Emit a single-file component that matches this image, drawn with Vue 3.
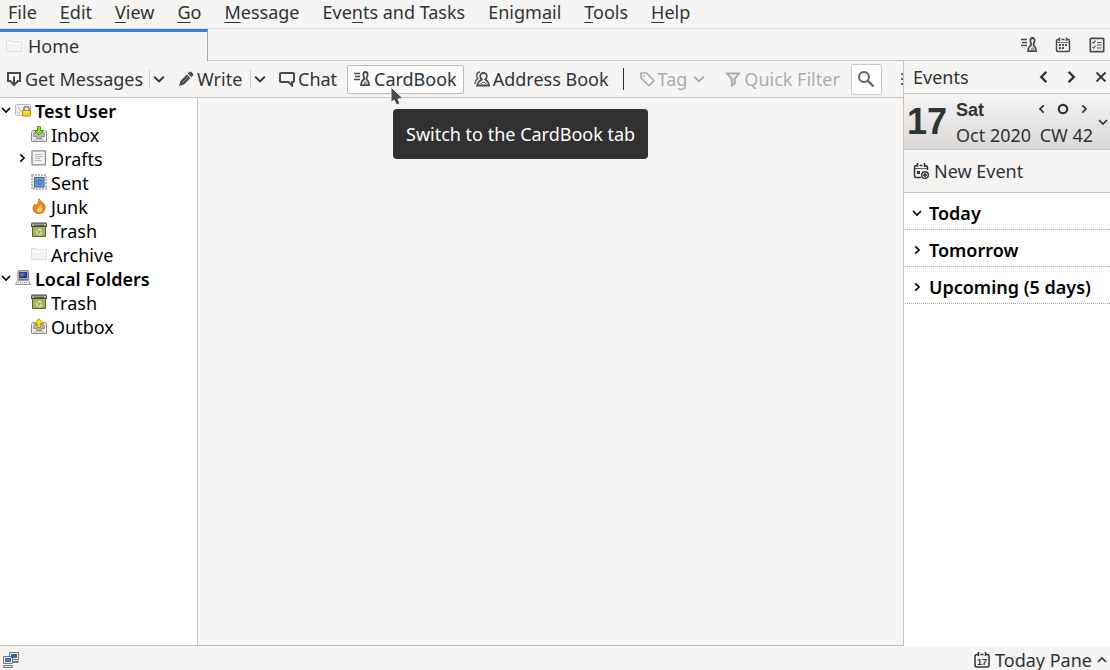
<script setup>
import { ref } from 'vue'

const menus = [
  ['', 'F', 'ile'], ['', 'E', 'dit'], ['', 'V', 'iew'], ['', 'G', 'o'], ['', 'M', 'essage'],
  ['Eve', 'n', 'ts and Tasks'], ['Enigm', 'a', 'il'], ['', 'T', 'ools'], ['', 'H', 'elp'],
]
const folders = [
  { name: 'Test User', icon: 'account', root: true, arrow: 'down' },
  { name: 'Inbox', icon: 'inbox' },
  { name: 'Drafts', icon: 'drafts', arrow: 'right' },
  { name: 'Sent', icon: 'sent' },
  { name: 'Junk', icon: 'junk' },
  { name: 'Trash', icon: 'trash' },
  { name: 'Archive', icon: 'folder' },
  { name: 'Local Folders', icon: 'computer', root: true, arrow: 'down' },
  { name: 'Trash', icon: 'trash' },
  { name: 'Outbox', icon: 'outbox' },
]
const agenda = ref([
  { name: 'Today', open: true },
  { name: 'Tomorrow', open: false },
  { name: 'Upcoming (5 days)', open: false },
])
</script>

<template>
  <div class="window">
    <svg class="defs" aria-hidden="true">
      <symbol id="down" viewBox="0 0 10 10"><path d="M1 3l4 4 4-4" fill="none" stroke="currentColor" stroke-width="1.700" /></symbol>
      <symbol id="up" viewBox="0 0 10 10"><path d="M1 7l4-4 4 4" fill="none" stroke="currentColor" stroke-width="1.700" /></symbol>
      <symbol id="right" viewBox="0 0 10 10"><path d="M3.300 1.300 7 5 3.300 8.700" fill="none" stroke="currentColor" stroke-width="1.700" /></symbol>
      <symbol id="left" viewBox="0 0 10 10"><path d="M6.700 1.300 3 5l3.700 3.700" fill="none" stroke="currentColor" stroke-width="1.700" /></symbol>
      <symbol id="close" viewBox="0 0 12 12"><path d="m1.500 1.500 9 9m0-9-9 9" fill="none" stroke="currentColor" stroke-width="1.800" /></symbol>
      <symbol id="ring" viewBox="0 0 12 12"><circle cx="6" cy="6" r="4.200" fill="none" stroke="currentColor" stroke-width="2.200" /></symbol>
      <symbol id="get" viewBox="0 0 16 16"><path d="M5 10H2V2h12v8h-3M8 5.500v8M4.500 10.500 8 14l3.500-3.500" fill="none" stroke="currentColor" stroke-width="2" /></symbol>
      <symbol id="write" viewBox="0 0 16 16"><path d="m1 15 1.400-5L8.800 3.600l3.600 3.600L6 13.600zM9.800 2.600l1.700-1.700q1-.8 2 .1l1.500 1.500q.9 1 0 2l-1.600 1.700z" fill="currentColor" /><path d="m4.500 11.500 5.500-5.500" stroke="#aaa" stroke-width=".8" /></symbol>
      <symbol id="chat" viewBox="0 0 16 16"><path d="M2 2h12q1 0 1 1v7q0 1-1 1h-1v3.500L9.500 11H2q-1 0-1-1V3q0-1 1-1z" fill="none" stroke="currentColor" stroke-width="2" /></symbol>
      <symbol id="cardbook" viewBox="0 0 16 16"><path d="M0 2.500h6M1 5.500h5M0 8.500h6" stroke="currentColor" stroke-width="1.600" /><path d="M11.500 1c-1.800 0-2.300 1.500-2.100 3.200.2 1.500.8 2 .8 3.200 0 1.200-1 1.300-2.100 2.600-.8 1-1 2.300-1 4.200H15c0-2-.2-3.200-1-4.200-1.100-1.300-1.500-1.400-1.500-2.600s.9-1.700 1.100-3.200C13.800 2.500 13.300 1 11.500 1z" fill="none" stroke="currentColor" stroke-width="1.800" /><path d="M9.500 13.500V12q1-2 2-2t2 2v1.500z" fill="currentColor" opacity=".5" /></symbol>
      <symbol id="address" viewBox="0 0 16 16"><path d="M6 1Q2.500 1.500 2.800 5q.2 1.800 1 2.700Q1 9.500.7 13" fill="none" stroke="currentColor" stroke-width="1.400" /><path d="M9.500 2C7.300 2 6 3.500 6.200 5.500c.2 1.400.9 2.400 1.500 3C5.500 9.800 3.800 11 3.200 14.500H15c-.3-3.500-1.700-4.700-3.700-6 .7-.6 1.300-1.500 1.500-3C13.100 3.500 11.800 2 9.500 2z" fill="none" stroke="currentColor" stroke-width="1.800" /><path d="M6.500 13.200q3-4 6 0" fill="none" stroke="currentColor" stroke-width="1" /></symbol>
      <symbol id="tag" viewBox="0 0 16 16"><path d="M2 2h5.500l7 7q.6.600 0 1.200l-4 4q-.6.600-1.200 0L2 7z" fill="none" stroke="currentColor" stroke-width="1.700" /><circle cx="5" cy="5" r="1.100" fill="currentColor" /></symbol>
      <symbol id="filter" viewBox="0 0 16 16"><path d="M2 2.500h12L9.800 8v4.500l-3 2V8z" fill="none" stroke="currentColor" stroke-width="1.900" /><path d="M4 5h8L9 8v4.500l-2 1V8z" fill="currentColor" opacity=".25" /></symbol>
      <symbol id="search" viewBox="0 0 18 18"><circle cx="7" cy="7" r="5" fill="none" stroke="currentColor" stroke-width="2" /><path d="m10.500 10.500 6 6" stroke="currentColor" stroke-width="2.300" /></symbol>
      <symbol id="calendar" viewBox="0 0 16 16"><path d="M4 2.500H3Q1.500 2.500 1.500 4v9q0 1.500 1.500 1.500h10q1.500 0 1.500-1.500V4q0-1.500-1.500-1.500h-1M6.500 2.500h3M4.500.5v3.500M11.500.5v3.500" fill="none" stroke="currentColor" stroke-width="1.500" /><path d="M4 8h2M7 8h2M10 8h2M4 11h2M7 11h2" stroke="currentColor" stroke-width="2" /><path d="M2 5.500h12" stroke="currentColor" stroke-width=".8" /></symbol>
      <symbol id="tasks" viewBox="0 0 16 16"><rect x="1.300" y="1.300" width="13.400" height="13.400" rx="1" fill="none" stroke="currentColor" stroke-width="1.700" /><path d="m3.500 5 1 1.200 2.200-2.700M3.500 10l1 1.200 2.200-2.700M8 5.500h4.500M8 8h4.500M8 11h4.500" fill="none" stroke="currentColor" stroke-width="1.100" /></symbol>
      <symbol id="newevent" viewBox="0 0 16 16"><path d="M4 2.500H3Q1.500 2.500 1.500 4v9q0 1.500 1.500 1.500h5M12 2.500q2.500 0 2.500 2.500v2M6.500 2.500h3M4.500 0v4M11.500 0v4" fill="none" stroke="currentColor" stroke-width="1.500" /><path d="M2 5.500h12" stroke="currentColor" stroke-width=".8" /><path d="M4 8h3v3H4z" fill="currentColor" /><circle cx="12" cy="12" r="3.300" fill="none" stroke="currentColor" stroke-width="1.400" /><path d="M10 12h4m-2-2v4" stroke="currentColor" stroke-width="1.400" /></symbol>
      <symbol id="folder" viewBox="0 0 16 16"><path d="M.5 13.500v-11h5l1 1.500h9v9.500z" fill="#f3f3f3" stroke="#dfdfdf" /><path d="M1 5.500h14" stroke="#fff" /></symbol>
      <symbol id="account" viewBox="0 0 16 16"><rect x=".5" y="2.500" width="15" height="11" rx="1" fill="#eee" stroke="#bbb" /><path d="m2.500 5 4 3.500-4 3.500m4-3.500h2" fill="none" stroke="#bbb" stroke-width="1" /><path d="M9 9V7q0-2.500 2.500-2.500T14 7v2" fill="none" stroke="#888" stroke-width="1.700" /><rect x="7.500" y="8.500" width="8" height="5.500" rx=".5" fill="#f5cf25" stroke="#b88a00" /><path d="M8.500 10h6" stroke="#ffed85" /></symbol>
      <symbol id="tray" viewBox="0 0 16 16"><path d="M2.500 4.500q-2 0-2 2v9h15v-9q0-2-2-2z" fill="#ececea" stroke="#8c8e89" /><path d="M3 6.500h10l.5 4h-3v2h-5v-2h-3z" fill="#b5b8b3" stroke="#858883" stroke-width=".9" /><path d="M2.500 13.800h11" stroke="#bbb" /></symbol>
      <symbol id="inbox" viewBox="0 0 16 16"><use href="#tray" /><path d="M6.500.5h3v4h3L8 9 3.500 4.500h3z" fill="#8ae234" stroke="#4e9a06" /></symbol>
      <symbol id="outbox" viewBox="0 0 16 16"><use href="#tray" /><path d="M6.500 9.500h3v-4h3L8 .7 3.500 5.500h3z" fill="#fbdc25" stroke="#c4a000" /></symbol>
      <symbol id="drafts" viewBox="0 0 16 16"><rect x="1" y=".8" width="13.500" height="14" rx=".5" fill="#f2f2f2" stroke="#888a85" stroke-width="1.200" /><path d="M4 4.500h7M4 6.500h8M4 8.500h5M4 10.500h7" stroke="#bbb" /></symbol>
      <symbol id="sent" viewBox="0 0 16 16"><rect x="1" y="1" width="14" height="14" fill="#eee" stroke="#aaa69c" stroke-width="1.500" stroke-dasharray="2 1" /><rect x="3.500" y="3.500" width="9.500" height="9.500" fill="#729fcf" stroke="#3465a4" /><circle cx="8.200" cy="8.200" r="2.500" fill="#6190c8" stroke="#4c7fbd" stroke-width="1.300" /></symbol>
      <symbol id="junk" viewBox="0 0 16 16"><path d="M8 .5q1 2.500 3 3.500t3 4q.7 5.500-3.500 7.300-2.500.8-5 0Q1.500 13.500 2 9.500q.3-2 2-3.500l.5 2Q8 5 8 .5z" fill="#f58220" stroke="#d96908" stroke-width=".8" /><path d="M9 6q.5 2-1.500 3.500T6 13q1 1.500 3 1.200 2.500-.7 2.200-3.500Q11 8 9 6z" fill="#ffd18a" /></symbol>
      <symbol id="trash" viewBox="0 0 16 16"><path d="M1.500 3.500h13v11h-13z" fill="#a3b35d" stroke="#566a20" /><path d="M1 1.200h14l.5 3.300H.5z" fill="#ddd" stroke="#454b3e" stroke-width="1.200" /><path d="M2.500 3.200h11" stroke="#3d4432" stroke-width="1.300" /><circle cx="8" cy="10" r="2.500" fill="none" stroke="#e1ebba" stroke-width="1.300" stroke-dasharray="4 1.200" /></symbol>
      <symbol id="computer" viewBox="0 0 16 16"><rect x="3" y=".7" width="10.500" height="8.800" rx=".5" fill="#ddd" stroke="#777" /><rect x="4.500" y="2.200" width="7.500" height="5.800" fill="#263e87" stroke="#1c2d62" stroke-width=".6" /><path d="m5 3 6 1-5 3z" fill="#607bbd" /><path d="M2.500 10.500h11l2 4H.5z" fill="#eee" stroke="#999" /><path d="M3 12.500h10" stroke="#999" stroke-dasharray="1 1" /></symbol>
      <symbol id="network" viewBox="0 0 16 16"><g stroke="#777" fill="#eee"><path d="M6.500.5h9v7h-9zM6.500 9.500h9v1h-9z" /><path d="M.5 4.500h9v7h-9zM.5 13.500h9v2h-9z" /></g><path d="M8 2h6v4H8zM2 6h6v4H2z" fill="#3465a4" /><path d="M3 7h4v2H3z" fill="#5b87ca" /></symbol>
    </svg>

    <nav class="menubar">
      <button v-for="m in menus" :key="m.join('')">{{ m[0] }}<u>{{ m[1] }}</u>{{ m[2] }}</button>
    </nav>

    <div class="tabs">
      <button class="tab"><svg class="icon"><use href="#folder" /></svg>Home</button>
      <div class="tab-tools">
        <button aria-label="CardBook tab"><svg class="icon"><use href="#cardbook" /></svg></button>
        <button aria-label="Calendar tab"><svg class="icon"><use href="#calendar" /></svg></button>
        <button aria-label="Tasks tab"><svg class="icon"><use href="#tasks" /></svg></button>
      </div>
    </div>

    <div class="body">
      <div class="mail">
        <div class="toolbar">
          <button class="tool get"><svg class="icon"><use href="#get" /></svg>Get Messages</button>
          <button class="drop" aria-label="Get messages options"><svg class="x"><use href="#down" /></svg></button>
          <button class="tool write"><svg class="icon"><use href="#write" /></svg>Write</button>
          <button class="drop" aria-label="Write options"><svg class="x"><use href="#down" /></svg></button>
          <button class="tool chat"><svg class="icon"><use href="#chat" /></svg>Chat</button>
          <div class="hovered">
            <button class="tool card"><svg class="icon"><use href="#cardbook" /></svg>CardBook</button>
            <svg class="pointer" viewBox="0 0 14 20"><path d="M1 1v15.500l3-2.500 2.500 5 3.500-1.500-2-4.500 5-.5z" fill="#4a4a4a" stroke="#fff" stroke-width="1" /></svg>
            <div class="tooltip" role="tooltip">Switch to the CardBook tab</div>
          </div>
          <button class="tool address"><svg class="icon"><use href="#address" /></svg>Address Book</button>
          <span class="rule"></span>
          <button class="tool tag" disabled><svg class="icon"><use href="#tag" /></svg>Tag<svg class="x"><use href="#down" /></svg></button>
          <button class="tool filter" disabled><svg class="icon"><use href="#filter" /></svg>Quick Filter</button>
          <button class="search" aria-label="Search"><svg><use href="#search" /></svg></button>
          <span class="grip"></span>
        </div>
        <div class="panes">
          <ul class="folders">
            <li v-for="(f, i) in folders" :key="i" :class="{ root: f.root }">
              <span class="twisty"><svg v-if="f.arrow" class="chev"><use :href="'#' + f.arrow" /></svg></span>
              <svg class="icon"><use :href="'#' + f.icon" /></svg>
              <span>{{ f.name }}</span>
            </li>
          </ul>
          <main class="content"></main>
        </div>
      </div>

      <aside class="today">
        <header class="pane-head">
          <h2>Events</h2>
          <button aria-label="Previous pane"><svg class="big"><use href="#left" /></svg></button>
          <button aria-label="Next pane"><svg class="big"><use href="#right" /></svg></button>
          <button class="close" aria-label="Close"><svg class="x"><use href="#close" /></svg></button>
        </header>
        <div class="date">
          <strong class="day">17</strong>
          <div class="date-lines">
            <div class="line">
              <b>Sat</b>
              <span class="steps">
                <button aria-label="Previous day"><svg class="chev"><use href="#left" /></svg></button>
                <button aria-label="Today"><svg class="x"><use href="#ring" /></svg></button>
                <button aria-label="Next day"><svg class="chev"><use href="#right" /></svg></button>
              </span>
            </div>
            <div class="line"><span>Oct 2020</span><span>CW 42</span></div>
          </div>
          <button class="more" aria-label="Show month"><svg class="chev"><use href="#down" /></svg></button>
        </div>
        <div class="new"><button><svg class="icon"><use href="#newevent" /></svg>New Event</button></div>
        <div class="agenda">
          <button v-for="a in agenda" :key="a.name" :aria-expanded="a.open" @click="a.open = !a.open">
            <svg class="chev"><use :href="a.open ? '#down' : '#right'" /></svg>{{ a.name }}
          </button>
        </div>
      </aside>
    </div>

    <footer class="status">
      <svg class="icon"><use href="#network" /></svg>
      <button>
        <svg class="icon" viewBox="0 0 16 16"><path d="M4 2.500H3Q1 2.500 1 4.500V13q0 2 2 2h10q2 0 2-2V4.500q0-2-2-2h-1M6.500 2.500h3M4.500 0v4M11.500 0v4" fill="none" stroke="currentColor" stroke-width="1.500" /><text x="8" y="13" text-anchor="middle" font-family="Liberation Sans, sans-serif" font-weight="700" font-size="9" fill="currentColor">17</text></svg>
        Today Pane
        <svg class="chev"><use href="#up" /></svg>
      </button>
    </footer>
  </div>
</template>

<style>
body { margin: 0; }
</style>

<style scoped>
.window { display: flex; flex-direction: column; height: 100vh; overflow: hidden; background: #f6f5f4; color: #2e3436; font: 18px/24px "Noto Sans", sans-serif; white-space: nowrap; }
.defs { position: absolute; width: 0; height: 0; }
button { display: flex; align-items: center; margin: 0; padding: 0; border: 0; background: none; color: inherit; font: inherit; }
svg { flex: none; display: block; }
.icon { width: 16px; height: 16px; }
.chev { width: 10px; height: 10px; }
.big { width: 14px; height: 14px; }
.x { width: 12px; height: 12px; }

.menubar { display: flex; gap: 23px; height: 28px; padding-left: 8px; border-bottom: 1px solid #dcdad8; }
.menubar button { display: block; height: 24px; }
.menubar u { text-decoration-thickness: 1px; text-underline-offset: 3px; }

.tabs { display: flex; height: 32px; }
.tab { box-sizing: border-box; width: 208px; gap: 6px; padding: 0 0 2px 6px; border-top: 3px solid #3584e4; border-right: 1px solid #aaa8a6; }
.tab-tools { flex: 1; display: flex; justify-content: flex-end; gap: 18px; padding-right: 5px; border-bottom: 1px solid #c5c2c0; color: #474d4f; }

.body { flex: 1; display: grid; grid-template-columns: minmax(0, 1fr) 207px; min-height: 0; }
.mail { display: flex; flex-direction: column; border-bottom: 1px solid #c2bfbc; min-width: 0; }
.toolbar { display: flex; align-items: center; height: 36px; padding-left: 6px; border-bottom: 1px solid #c5c2c0; }
.tool { gap: 3px; }
.tool .icon { color: #464c4e; }
.get { min-width: 143px; }
.drop { height: 18px; padding-left: 3px; border-left: 1px solid #d2d0ce; }
.write { margin-left: 13px; min-width: 72px; }
.drop + .chat { margin-left: 13px; }
.chat { min-width: 68px; }
.hovered { position: relative; }
.card { box-sizing: border-box; height: 29px; gap: 4px; padding: 0 6px; border: 1px solid #bdbbb9; border-radius: 2px; background: #fcfcfc; }
.pointer { position: absolute; left: 43px; top: 21px; width: 14px; height: 20px; z-index: 2; }
.tooltip { position: absolute; left: 46px; top: 44px; z-index: 1; padding: 13px; border-radius: 4px; background: #313131; color: #fff; }
.address { margin-left: 10px; }
.rule { width: 1px; height: 22px; margin: 0 15px 0 14px; background: #2e3436; }
.tool:disabled, .tool:disabled .icon { color: #aaadad; }
.tag .x { margin-left: 3px; }
.filter { margin-left: 20px; }
.search { box-sizing: border-box; width: 31px; height: 31px; margin-left: 11px; justify-content: center; border: 1px solid #cdc7c2; border-radius: 2px; background: #fff; color: #606466; }
.search svg { width: 18px; height: 18px; }
.grip { width: 2px; height: 13px; margin-left: auto; background: repeating-linear-gradient(#666 0 2px, transparent 2px 5px); }
.panes { flex: 1; display: flex; }
.folders { box-sizing: border-box; width: 198px; margin: 0; padding: 1px 0 0; list-style: none; background: #fff; border-right: 1px solid #cdc7c2; color: #000; }
.folders li { display: flex; align-items: center; height: 24px; gap: 4px; }
.twisty { width: 27px; display: flex; justify-content: flex-end; }
.folders .icon, .folders .chev { margin-bottom: 2px; }
.root { font-weight: 600; }
.root .twisty { width: 11px; }
.content { flex: 1; }

.today { display: flex; flex-direction: column; border-left: 1px solid #c5c2c0; background: #fff; }
.pane-head { display: flex; align-items: center; height: 32px; padding-left: 9px; background: #f6f5f4; border-bottom: 1px solid #cdc7c2; }
.pane-head h2 { flex: 1; margin: 0; font: inherit; }
.pane-head button { margin-right: 13px; }
.pane-head .close { margin: 0 3px 0 4px; }
.date { display: flex; height: 55px; padding-left: 3px; background: linear-gradient(#f5f4f3, #d9d8d6); border-bottom: 1px solid #c8c4c0; }
.day { font: 700 36px/55px "Liberation Sans", sans-serif; }
.date-lines { width: 137px; margin-left: 9px; padding-top: 4px; }
.line { display: flex; justify-content: space-between; height: 25px; }
.line b { font: 700 18px/25px "Liberation Sans", sans-serif; }
.steps { display: flex; gap: 10px; height: 22px; padding-right: 4px; }
.more { margin-left: 5px; }
.new { display: flex; height: 42px; padding-left: 9px; background: #f6f5f4; border-bottom: 1px solid #cdc7c2; }
.new button { gap: 5px; }
.agenda { padding: 0 0 0 1px; }
.agenda button { box-sizing: border-box; width: 100%; height: 37px; gap: 7px; padding: 4px 0 0 7px; border-bottom: 1px dotted #aaa; color: #000; font-weight: 600; }

.status { display: flex; align-items: center; justify-content: space-between; height: 24px; padding: 4px 3px 0; box-sizing: border-box; }
.status button { gap: 5px; line-height: 20px; }
</style>
